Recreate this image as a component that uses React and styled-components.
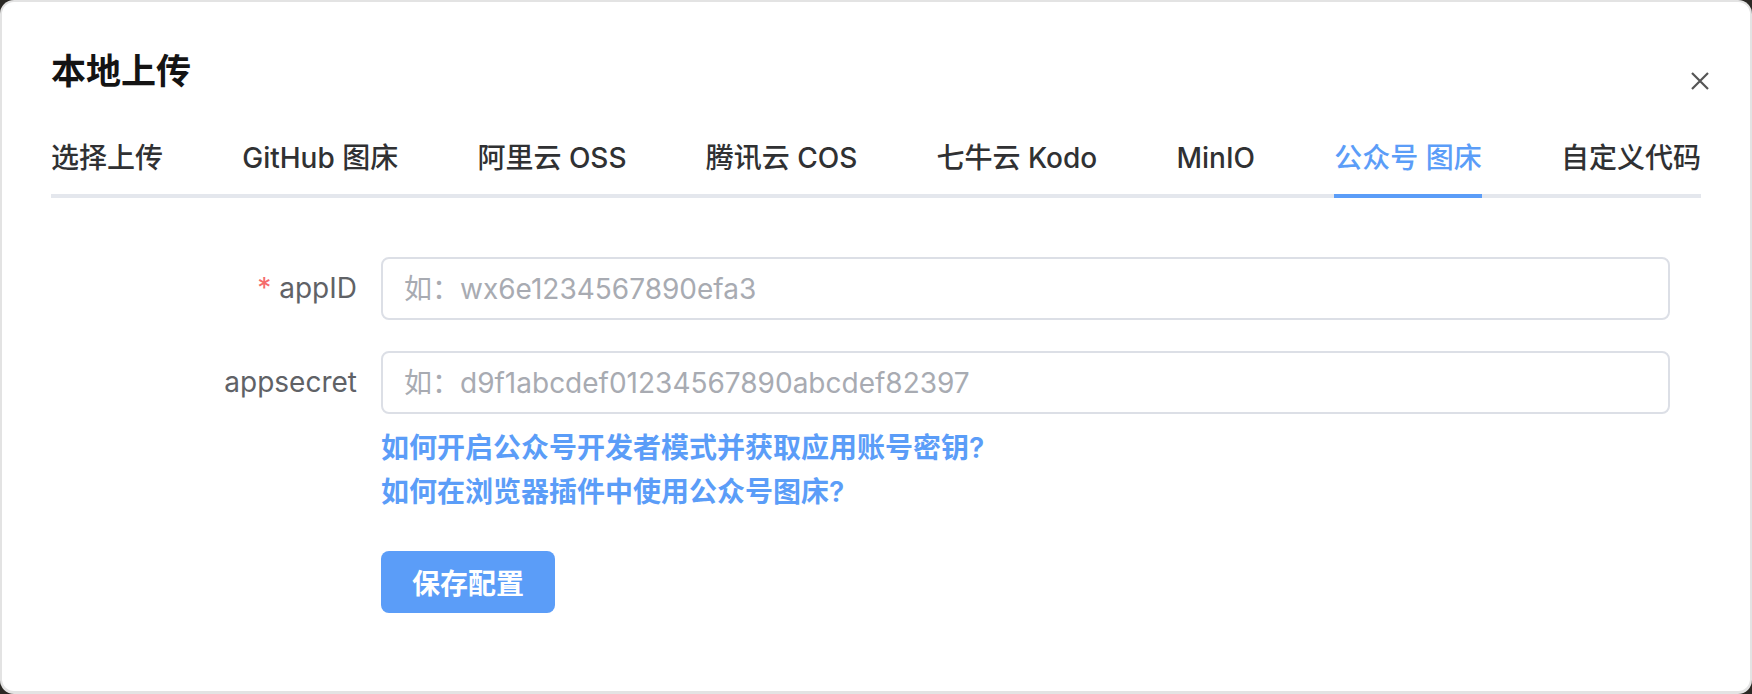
import styled, { createGlobalStyle } from "styled-components";

const GlobalStyle = createGlobalStyle`
  html, body {
    margin: 0;
    padding: 0;
  }
  body {
    background: #2b2925;
    font-family: Inter, "Noto Sans CJK SC", sans-serif;
    -webkit-font-smoothing: antialiased;
  }
`;

const BLUE = "#5b9df8";

const tabs = [
  "选择上传",
  "GitHub 图床",
  "阿里云 OSS",
  "腾讯云 COS",
  "七牛云 Kodo",
  "MinIO",
  "公众号 图床",
  "自定义代码",
];

function App() {
  return (
    <>
      <GlobalStyle />
      <Frame>
        <Dialog>
          <Title>本地上传</Title>
          <CloseButton aria-label="close">
            <svg width="20" height="20" viewBox="0 0 20 20">
              <path
                d="M2 2 L18 18 M18 2 L2 18"
                stroke="#555"
                strokeWidth="2.2"
                fill="none"
              />
            </svg>
          </CloseButton>

          <TabBar>
            {tabs.map((t) => (
              <Tab key={t} $active={t === "公众号 图床"}>
                {t}
              </Tab>
            ))}
          </TabBar>

          <Form>
            <FormRow>
              <Label>
                <Required>*</Required>appID
              </Label>
              <Field>
                <Input placeholder="如：wx6e1234567890efa3" />
              </Field>
            </FormRow>
            <FormRow $gap={37}>
              <Label>appsecret</Label>
              <Field>
                <Input placeholder="如：d9f1abcdef01234567890abcdef82397" />
                <Links>
                  <HelpLink href="#">如何开启公众号开发者模式并获取应用账号密钥?</HelpLink>
                  <HelpLink href="#">如何在浏览器插件中使用公众号图床?</HelpLink>
                </Links>
              </Field>
            </FormRow>
            <FormRow>
              <Label />
              <Field>
                <SaveButton>保存配置</SaveButton>
              </Field>
            </FormRow>
          </Form>
        </Dialog>
      </Frame>
    </>
  );
}

const Frame = styled.div`
  width: 1752px;
  height: 694px;
  box-sizing: border-box;
  padding: 2px 2px 3px 2px;
  background: #e3e3e3;
  border-radius: 14px;
  display: flex;
`;

const Dialog = styled.div`
  position: relative;
  flex: 1;
  min-width: 0;
  background: #fff;
  border-radius: 12px;
  padding: 49px 49px 0;
`;

const Title = styled.h2`
  margin: 0;
  font-size: 35px;
  line-height: 40px;
  font-weight: 700;
  color: #141414;
`;

const CloseButton = styled.button`
  position: absolute;
  top: 69px;
  right: 40px;
  width: 20px;
  height: 20px;
  padding: 0;
  border: none;
  background: none;
  display: flex;
  cursor: pointer;
`;

const TabBar = styled.div`
  display: flex;
  justify-content: space-between;
  margin-top: 27px;
  box-shadow: inset 0 -4px 0 #e4e7ed;
`;

const Tab = styled.div`
  height: 80px;
  line-height: 80px;
  font-size: 28px;
  font-weight: 500;
  white-space: nowrap;
  color: ${(p) => (p.$active ? BLUE : "#303133")};
  box-shadow: ${(p) => (p.$active ? `inset 0 -4px 0 ${BLUE}` : "none")};
`;

const Form = styled.div`
  padding-top: 59px;
  padding-right: 31px;
`;

const FormRow = styled.div`
  display: flex;
  margin-bottom: ${(p) => p.$gap ?? 31}px;
`;

const Label = styled.label`
  width: 330px;
  flex-shrink: 0;
  box-sizing: border-box;
  padding-right: 24px;
  text-align: right;
  font-size: 28px;
  line-height: 63px;
  color: #606266;
`;

const Required = styled.span`
  color: #f56c6c;
  margin-right: 8px;
`;

const Field = styled.div`
  flex: 1;
  min-width: 0;
  display: flex;
  flex-direction: column;
  align-items: flex-start;
`;

const Input = styled.input`
  width: 100%;
  height: 63px;
  box-sizing: border-box;
  border: 2px solid #dcdfe6;
  border-radius: 8px;
  padding: 0 21px;
  font-family: inherit;
  font-size: 28px;
  color: #606266;
  outline: none;
  &::placeholder {
    color: #a8abb2;
  }
`;

const Links = styled.div`
  margin-top: 12px;
  display: flex;
  flex-direction: column;
`;

const HelpLink = styled.a`
  font-size: 28px;
  line-height: 44px;
  font-weight: 600;
  color: ${BLUE};
  text-decoration: none;
`;

const SaveButton = styled.button`
  height: 62px;
  padding: 0 31px;
  border: none;
  border-radius: 8px;
  background: ${BLUE};
  color: #fff;
  font-family: inherit;
  font-size: 28px;
  font-weight: 700;
  cursor: pointer;
`;

export default App;
